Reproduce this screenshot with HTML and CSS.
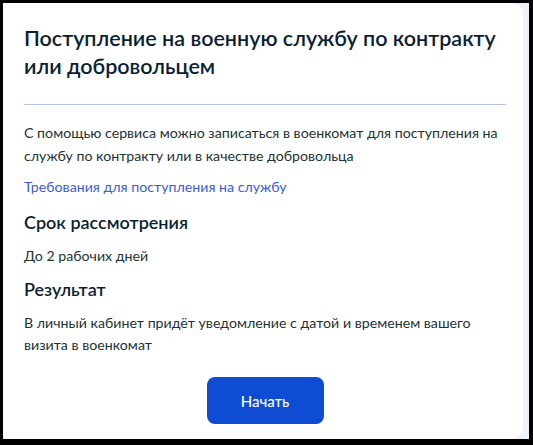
FILE: index.html
```html
<!DOCTYPE html>
<html lang="ru">
<head>
<meta charset="utf-8">
<link rel="stylesheet" href="styles.css">
</head>
<body>
<div class="frame">
  <div class="card">
    <h1 class="title">Поступление на военную службу по контракту или добровольцем</h1>
    <hr class="divider">
    <p class="text intro">С помощью сервиса можно записаться в военкомат для поступления на службу по контракту или в качестве добровольца</p>
    <a class="link" href="#">Требования для поступления на службу</a>
    <h2 class="subtitle">Срок рассмотрения</h2>
    <p class="text">До 2 рабочих дней</p>
    <h2 class="subtitle result">Результат</h2>
    <p class="text">В личный кабинет придёт уведомление с датой и временем вашего визита в военкомат</p>
    <div class="actions">
      <button class="btn">Начать</button>
    </div>
  </div>
</div>
</body>
</html>
```

FILE: styles.css
```css
html, body {
  margin: 0;
  padding: 0;
  height: 100%;
}
body {
  background: #000;
  font-family: Lato, "Noto Sans", sans-serif;
  color: #0b1f33;
  box-sizing: border-box;
  padding: 3px 4px 6px 3px;
}
.frame {
  box-sizing: border-box;
  height: 100%;
  display: flex;
  background: #eef2f9;
  padding-right: 6px;
}
.card {
  flex: 1;
  box-sizing: border-box;
  background: #fff;
  border-radius: 0 12px 12px 0;
  padding: 21px 17px 0 21px;
  display: flex;
  flex-direction: column;
  align-items: flex-start;
}
.title {
  margin: 0;
  font-size: 21.5px;
  line-height: 28px;
  font-weight: 600;
  color: #0b1f33;
}
.divider {
  align-self: stretch;
  margin: 24px 0 0 0;
  border: 0;
  height: 1px;
  background: #b3c2e6;
}
.text {
  margin: 10px 0 0 0;
  font-size: 14.2px;
  line-height: 22px;
  color: #233;
}
.intro {
  margin-top: 16px;
  line-height: 23px;
}
.link {
  margin-top: 9px;
  font-size: 14.2px;
  line-height: 22px;
  color: #3d5bd9;
  text-decoration: none;
}
.subtitle {
  margin: 11px 0 0 0;
  font-size: 18px;
  line-height: 26px;
  font-weight: 600;
  color: #0b1f33;
}
.result {
  margin-top: 9px;
}
.actions {
  align-self: stretch;
  display: flex;
  justify-content: center;
  margin-top: 21px;
}
.btn {
  width: 117px;
  height: 47px;
  border: 0;
  border-radius: 8px;
  background: #0d4cd3;
  color: #fff;
  font-family: Lato, "Noto Sans", sans-serif;
  font-size: 15px;
  font-weight: 500;
  cursor: pointer;
}
```
